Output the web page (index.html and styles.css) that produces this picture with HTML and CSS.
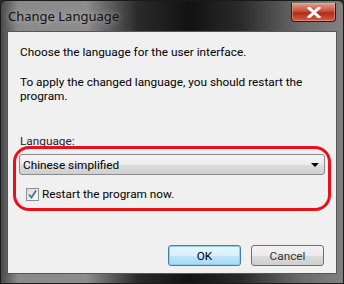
FILE: index.html
```html
<!DOCTYPE html>
<html>
<head>
<meta charset="utf-8">
<link rel="stylesheet" href="styles.css">
</head>
<body>
<div class="win">
  <div class="titlebar">
    <span class="title">Change Language</span>
    <div class="close">
      <svg width="14" height="11" viewBox="0 0 14 11"><path d="M2 1 L12 10 M12 1 L2 10" stroke="#fff" stroke-width="3" stroke-linecap="square"/></svg>
    </div>
  </div>
  <div class="client">
    <p class="line first">Choose the language for the user interface.</p>
    <p class="line second">To apply the changed language, you should restart the<br>program.</p>
    <div class="label">Language:</div>
    <div class="group">
      <div class="select">
        <span>Chinese simplified</span>
        <span class="arrow"></span>
      </div>
      <div class="check">
        <span class="box">
          <svg width="11" height="11" viewBox="0 0 11 11"><path d="M2 5.5 L4.5 8.5 L9 1.5" fill="none" stroke="#4a6fa5" stroke-width="1.8"/></svg>
        </span>
        <span>Restart the program now.</span>
      </div>
    </div>
    <div class="buttons">
      <div class="btn ok">OK</div>
      <div class="btn cancel">Cancel</div>
    </div>
  </div>
  <div class="bottom"></div>
</div>
</body>
</html>
```
FILE: styles.css
```css
html, body { margin: 0; padding: 0; background: #2a2a2a; }
.win {
  width: 344px;
  height: 284px;
  display: flex;
  flex-direction: column;
  background: linear-gradient(90deg, #4a4a4a 0%, #8a8a8a 5%, #8c8c8c 25%, #2a2a2a 40%, #121212 55%, #2a2a2a 70%, #6c6c6c 88%, #808080 100%);
  font-family: Roboto, "Noto Sans", sans-serif;
  font-size: 11.8px;
  color: #000;
  box-sizing: border-box;
  border: 1px solid #1a1a1a;
  border-radius: 6px 6px 0 0;
}
.titlebar {
  height: 30px;
  display: flex;
  align-items: flex-start;
  justify-content: space-between;
  padding: 0 7px 0 7px;
  box-sizing: border-box;
}
.title {
  margin-top: 7px;
  font-family: "Noto Sans", sans-serif;
  font-size: 13px;
  line-height: 17px;
  color: #111;
  text-shadow: 0 0 6px rgba(255,255,255,0.5);
}
.close {
  width: 43px;
  height: 18px;
  margin-top: 2px;
  border: 1px solid #3a1410;
  border-top: none;
  border-radius: 0 0 4px 4px;
  background: linear-gradient(180deg, #e0a090 0%, #c8503c 45%, #b02a18 55%, #d06048 100%);
  display: flex;
  align-items: center;
  justify-content: center;
  box-shadow: inset 0 0 0 1px rgba(255,200,180,0.4);
}
.client {
  flex: 1;
  margin: 0 6px;
  background: #f0f0f0;
  border: 1px solid #555;
  padding: 13px 12px 0 12px;
  display: flex;
  flex-direction: column;
}
.line { margin: 0; line-height: 14px; }
.second { margin-top: 16px; }
.label {
  margin-top: 31px;
  line-height: 14px;
  height: 12px;
  color: #222;
}
.group {
  margin: 0 -7px;
  border: 3px solid #e8101a;
  border-radius: 16px;
  padding: 5px 3px 7px 3px;
  display: flex;
  flex-direction: column;
}
.select {
  height: 21px;
  box-sizing: border-box;
  border: 1px solid #8a8a8a;
  border-radius: 3px;
  background: linear-gradient(180deg, #f6f6f6 0%, #ececec 50%, #dddddd 51%, #cfcfcf 100%);
  display: flex;
  align-items: center;
  justify-content: space-between;
  padding: 0 5px 0 3px;
}
.arrow {
  width: 0; height: 0;
  border-left: 4px solid transparent;
  border-right: 4px solid transparent;
  border-top: 4px solid #000;
}
.check {
  margin-top: 12px;
  padding-left: 7px;
  display: flex;
  align-items: center;
  gap: 3px;
  line-height: 14px;
}
.box {
  width: 13px; height: 13px;
  box-sizing: border-box;
  border: 1px solid #8e8f8f;
  background: linear-gradient(135deg, #dcdcdc, #fafafa);
  display: flex;
  align-items: center;
  justify-content: center;
}
.buttons {
  margin-top: 34px;
  display: flex;
  justify-content: flex-end;
  gap: 10px;
}
.btn {
  width: 73px;
  height: 21px;
  box-sizing: border-box;
  border-radius: 3px;
  display: flex;
  align-items: center;
  justify-content: center;
}
.ok {
  border: 1px solid #3c7fb1;
  background: linear-gradient(180deg, #eaf6fd 0%, #d9f0fc 50%, #bee6fd 51%, #a7d9f5 100%);
  box-shadow: inset 0 0 0 1px #8fd0f0;
}
.cancel {
  border: 1px solid #707070;
  background: linear-gradient(180deg, #f2f2f2 0%, #ebebeb 50%, #dddddd 51%, #cfcfcf 100%);
  color: #333;
}
.bottom { height: 9px; }
```
